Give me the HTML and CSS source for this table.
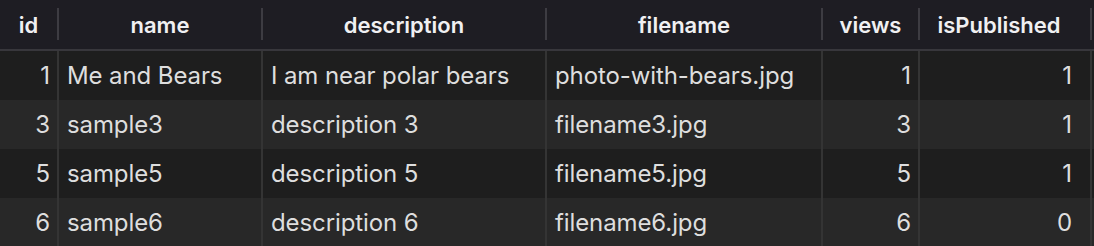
FILE: index.html
```html
<!DOCTYPE html>
<html>
<head>
<meta charset="utf-8">
<link rel="stylesheet" href="styles.css">
</head>
<body>
<div class="table">
  <div class="head">
    <div class="th">id</div>
    <div class="th">name</div>
    <div class="th">description</div>
    <div class="th">filename</div>
    <div class="th">views</div>
    <div class="th th-last">isPublished</div>
    <div class="th th-end"></div>
  </div>
  <div class="row">
    <div class="td num">1</div>
    <div class="td">Me and Bears</div>
    <div class="td">I am near polar bears</div>
    <div class="td">photo-with-bears.jpg</div>
    <div class="td num">1</div>
    <div class="td num last">1</div>
    <div class="td end"></div>
  </div>
  <div class="row alt">
    <div class="td num">3</div>
    <div class="td">sample3</div>
    <div class="td">description 3</div>
    <div class="td">filename3.jpg</div>
    <div class="td num">3</div>
    <div class="td num last">1</div>
    <div class="td end"></div>
  </div>
  <div class="row">
    <div class="td num">5</div>
    <div class="td">sample5</div>
    <div class="td">description 5</div>
    <div class="td">filename5.jpg</div>
    <div class="td num">5</div>
    <div class="td num last">1</div>
    <div class="td end"></div>
  </div>
  <div class="row alt">
    <div class="td num">6</div>
    <div class="td">sample6</div>
    <div class="td">description 6</div>
    <div class="td">filename6.jpg</div>
    <div class="td num">6</div>
    <div class="td num last">0</div>
    <div class="td end"></div>
  </div>
</div>
</body>
</html>
```
FILE: styles.css
```css
html, body {
  margin: 0;
  padding: 0;
  background: #1e1e1e;
}
body {
  width: 1094px;
  height: 246px;
  overflow: hidden;
  font-family: Inter, "Liberation Sans", Arial, sans-serif;
}
.table {
  display: flex;
  flex-direction: column;
}
.head, .row {
  display: grid;
  grid-template-columns: 59px 204px 284px 276px 97px 172px 2px;
}
.head {
  background: #1e1d23;
  padding: 8px 0 9px;
  border-bottom: 2px solid #38373c;
}
.th {
  height: 32px;
  padding-top: 2px;
  box-sizing: border-box;
  border-right: 2px solid #3d3c42;
  display: flex;
  align-items: center;
  justify-content: center;
  font-size: 22px;
  font-weight: 600;
  color: #f0f0f2;
}
.th-last {
  padding-right: 12px;
}
.th-end {
  border-right: none;
}
.row {
  height: 49px;
  background: #1e1e1e;
}
.row.alt {
  background: #282828;
}
.td {
  border-right: 2px solid #343434;
  display: flex;
  align-items: center;
  padding: 0 8px;
  font-size: 24px;
  letter-spacing: -0.1px;
  color: #dedede;
  white-space: nowrap;
  overflow: hidden;
}
.td.num {
  justify-content: flex-end;
  padding-right: 7px;
}
.td.last {
  padding-right: 18px;
}
.td.end {
  border-right: none;
  padding: 0;
}
```
